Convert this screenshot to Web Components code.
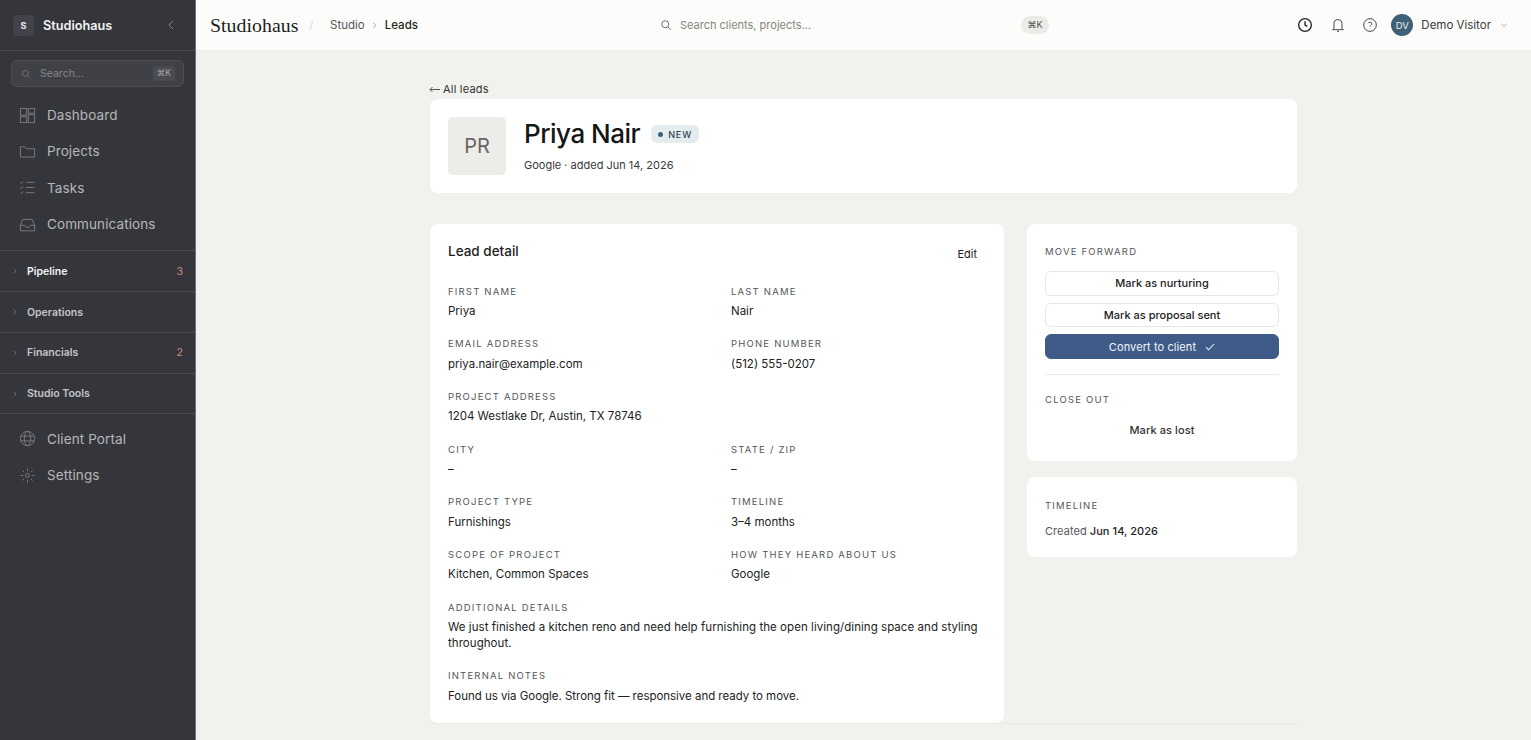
<!DOCTYPE html>
<html lang="en"><head><meta charset="utf-8"><title>Studiohaus</title>
<style>
html,body{margin:0;height:100%;overflow:hidden;background:#f1f1ed;font-family:Inter,"Noto Sans",sans-serif;color:#1a1a1a}
</style></head><body>
<app-shell></app-shell>
<script>
const I={
dash:'<rect x="3" y="3" width="8" height="8.5" /><rect x="13" y="3" width="8" height="6"/><rect x="3" y="13.5" width="8" height="7.5"/><rect x="13" y="11" width="8" height="10"/>',
folder:'<path d="M3 19V6h6l2 2.5h10V19z"/>',
tasks:'<path d="M3 5.5l1.3 1.3L6.5 4.3M3 12l1.3 1.3L6.5 10.8M3 18.5l1.3 1.3 2.2-2.5M10 5.5h11M10 12h11M10 18.5h11"/>',
inbox:'<path d="M3 13l3-7.5h12l3 7.5v7H3z"/><path d="M3 13h5.5l1.5 2.5h4l1.5-2.5H21"/>',
globe:'<circle cx="12" cy="12" r="9"/><ellipse cx="12" cy="12" rx="4" ry="9"/><path d="M3.5 9h17M3.5 15h17"/>',
gear:'<circle cx="12" cy="12" r="2.4"/><path d="M12 3v3.5M12 17.5V21M3 12h3.5M17.5 12H21M5.6 5.6l2.2 2.2M16.2 16.2l2.2 2.2M5.6 18.4l2.2-2.2M16.2 7.8l2.2-2.2"/>',
search:'<circle cx="10.5" cy="10.5" r="7"/><path d="M16 16l5.5 5.5"/>',
clock:'<circle cx="12" cy="12" r="9.5"/><path d="M12 6.5V12l3.5 2"/>',
bell:'<path d="M6 17V10a6 6 0 0 1 12 0v7l2 2H4z"/><path d="M10.5 21.5h3"/>',
help:'<circle cx="12" cy="12" r="9.5"/><path d="M9.3 9.5a2.8 2.8 0 0 1 5.4.8c0 1.9-2.7 2.2-2.7 3.9"/><path d="M12 17.2v.3"/>',
};
const svg=(n,s,c,w)=>`<svg width="${s}" height="${s}" viewBox="0 0 24 24" fill="none" stroke="${c}" stroke-width="${w}">${I[n]}</svg>`;
function def(name,css,html){
  customElements.define(name,class extends HTMLElement{
    constructor(){super();this.attachShadow({mode:'open'});}
    connectedCallback(){this.shadowRoot.innerHTML=`<style>${css}</style>`+(typeof html==='function'?html(this):html);}
  });
}
def('nav-item',`:host{display:flex;align-items:center;height:36.3px;padding-left:17.5px;gap:10.5px;font-size:13.5px;letter-spacing:.1px;color:#b6b7b9}svg{display:block;flex:none}`,
  e=>`${svg(e.getAttribute('icon'),19,'#808185',1.1)}<slot></slot>`);
def('nav-group',`:host{display:flex;align-items:center;height:39.4px;padding:.3px 12px 0 13px;border-bottom:1px solid #4a4b51;font-size:10.5px;font-weight:600;color:#c4c5c7;box-sizing:content-box}
 :host([active]){color:#f4f4f3}
 svg{flex:none;margin-right:10px}.n{margin-left:auto;color:#c98a78;font-weight:400;font-size:10.5px}`,
  e=>`<svg width="4" height="6" viewBox="0 0 4 6" fill="none" stroke="#7d7e82" stroke-width=".8"><path d="M.8.6 3.2 3 .8 5.4"/></svg><slot></slot>${e.getAttribute('n')?`<span class="n">${e.getAttribute('n')}</span>`:''}`);
def('app-sidebar',`:host{display:flex;flex-direction:column;flex:none;width:195px;height:100%;background:#35363c;border-right:1px solid #6f7075;box-sizing:content-box}
 .brand{display:flex;align-items:center;height:50px;border-bottom:1px solid #4a4b51;padding:0 21px 0 13px;gap:9px;flex:none}
 .logo{width:21px;height:21px;border-radius:4px;background:#42434a;color:#eee;font-size:9px;font-weight:700;display:flex;align-items:center;justify-content:center}
 .name{font-size:12.7px;font-weight:600;color:#f2f2f1;flex:1}
 .search{display:flex;align-items:center;margin:9px 11px 10px;height:27px;box-sizing:border-box;border:1px solid #4e4f55;border-radius:6px;background:#404147;padding:0 8px 0 9px;gap:9px;font-size:10.5px;color:#85868a}
 .search span{flex:1}.k{flex:none!important;background:#4a4b51;border-radius:3px;color:#a8a9ac;font-size:8.5px;padding:2px 4px;line-height:11px;margin-right:0}
 .nav{padding-bottom:8.3px;border-bottom:1px solid #4a4b51}
 .foot{padding-top:6.5px}`,
 `<div class="brand"><div class="logo">S</div><div class="name">Studiohaus</div><svg width="6" height="10" viewBox="0 0 6 10" fill="none" stroke="#85868a" stroke-width="1"><path d="M5 1 1 5l4 4"/></svg></div>
 <div class="search">${svg('search',10,'#85868a',1.7)}<span>Search…</span><span class="k">⌘K</span></div>
 <div class="nav"><nav-item icon="dash">Dashboard</nav-item><nav-item icon="folder">Projects</nav-item><nav-item icon="tasks">Tasks</nav-item><nav-item icon="inbox">Communications</nav-item></div>
 <nav-group active n="3">Pipeline</nav-group><nav-group>Operations</nav-group><nav-group n="2">Financials</nav-group><nav-group>Studio Tools</nav-group>
 <div class="foot"><nav-item icon="globe">Client Portal</nav-item><nav-item icon="gear">Settings</nav-item></div>`);
def('app-header',`:host{display:flex;align-items:center;flex:none;height:50px;background:#fcfcfa;border-bottom:1px solid #ebebe7;padding:0 24px 0 14px;font-size:11.5px;position:relative}
 .logo{font-family:"Liberation Serif",serif;font-size:19.8px;color:#1c1c1c;letter-spacing:.05px}
 .sl{color:#d8d8d4;margin:0 17px 0 11px;font-size:13px;font-family:"Liberation Sans"}
 .c{color:#55565a}.ch{margin:0 7.5px}.cur{color:#1f1f1f;font-weight:500}
 .search{display:flex;align-items:center;width:389px;margin-left:242px;gap:8px;color:#86867f;font-size:11px}
 .search span{flex:1}.k{flex:none!important;background:#ebebe7;color:#555;border-radius:9px;padding:3px 6.5px 3px;font-size:9px;line-height:12px}
 .r{margin-left:auto;display:flex;align-items:center}
 .r svg{display:block}
 .av{width:22px;height:22px;border-radius:50%;background:#3f6176;color:#eaf0f3;font-size:9.5px;display:flex;align-items:center;justify-content:center;margin:0 8px 0 13px}
 .u{color:#3a3a3a;font-size:11.5px}`,
 `<span class="logo">Studiohaus</span><span class="sl">/</span><span class="c">Studio</span><svg class="ch" width="5" height="7" viewBox="0 0 5 7" fill="none" stroke="#a5a5a0" stroke-width=".9"><path d="M1 .8 4 3.5 1 6.2"/></svg><span class="cur">Leads</span>
 <div class="search">${svg('search',12,'#55565a',1.7)}<span>Search clients, projects…</span><span class="k">⌘K</span></div>
 <div class="r"><span style="margin-right:17px">${svg('clock',16,'#222',2)}</span><span style="margin-right:16.5px">${svg('bell',16,'#444',1.5)}</span>${svg('help',16,'#444',1.5)}<div class="av">DV</div><span class="u">Demo Visitor</span><svg style="margin-left:10px" width="6" height="4" viewBox="0 0 6 4" fill="none" stroke="#a5a5a0" stroke-width=".9"><path d="M.4.5 3 3.4 5.6.5"/></svg></div>`);
def('lead-field',`:host{display:block}:host([wide]){grid-column:1/-1}
 .l{font-size:9.5px;letter-spacing:1.2px;color:#55565a;line-height:14px;text-transform:uppercase;font-weight:400;padding-top:.35px}
 .v{font-size:11.5px;line-height:16px;margin-top:4.25px;color:#222}`,
 e=>`<div class="l">${e.getAttribute('label')}</div><div class="v" style="letter-spacing:${e.getAttribute('ls')||0}px"><slot></slot></div>`);
def('white-card',`:host{display:block;background:#fff;border-radius:8px;box-sizing:border-box}`,`<slot></slot>`);
def('action-btn',`:host{display:flex;align-items:center;justify-content:center;height:24.5px;box-sizing:border-box;border:1px solid #e6e5df;border-radius:6px;font-size:11px;font-weight:500;color:#222;background:#fff;gap:9px}
 :host([primary]){background:#3f5c88;border-color:#3f5c88;color:#f3f5f8;font-weight:400;letter-spacing:.1px}:host([plain]){border-color:transparent;color:#333;letter-spacing:.1px}`,
 e=>`<slot></slot>${e.hasAttribute('primary')?'<svg width="10" height="8" viewBox="0 0 10 8" fill="none" stroke="#eef1f5" stroke-width="1.1"><path d="M1 4.2 3.6 6.8 9 1"/></svg>':''}`);
def('sec-label',`:host{display:block;font-size:9.5px;letter-spacing:1.2px;color:#55565a;line-height:14px}`,`<slot></slot>`);
def('lead-page',`:host{display:block;width:867px;margin:0 auto;padding-top:31px}
 .back{font-size:11px;letter-spacing:.2px;color:#333;line-height:14px;margin-bottom:3px;font-weight:400;height:14px;display:flex;align-items:center;gap:3px;margin-left:-1px}
 .hd{display:flex;height:94px;padding:18px;gap:18px;box-sizing:border-box}
 .pr{width:58px;height:58px;background:#ecece8;border-radius:5px;color:#66665f;font-size:20px;display:flex;align-items:center;justify-content:center;flex:none}
 .t{display:flex;align-items:center;gap:11px;height:34px}
 h1{margin:0;font-size:26px;font-weight:500;color:#161616;letter-spacing:-.5px;line-height:34px}
 .badge{display:inline-flex;align-items:center;height:18px;border-radius:6px;background:#e4ecef;padding:0 7px;gap:5px;font-size:9px;letter-spacing:.9px;font-weight:500;color:#2f4654}
 .dot{width:5px;height:5px;border-radius:50%;background:#3f6176}
 .sub{font-size:11px;color:#3a3a3a;margin-top:7px;line-height:14px}
 .grid{display:grid;grid-template-columns:574px 270px;gap:23px;margin-top:31px;border-bottom:1px solid #e9e9e5;padding-bottom:0}
 .dh{display:flex;justify-content:space-between;height:42.3px}
 .edit{font-size:11px;font-weight:400;color:#222;padding:5px 9px 0 0}
 .f{display:grid;grid-template-columns:255px 1fr;column-gap:28px;row-gap:18.1px}
 .side{display:flex;flex-direction:column;gap:16px}
 .btns{display:flex;flex-direction:column;gap:7.2px;margin-top:12px}
 hr{border:0;border-top:1px solid #eaeae6;margin:15.5px 0 18px}
 .pl{margin-top:10.5px}
 .cr{font-size:11px;margin-top:10px;color:#55565a;line-height:16px;letter-spacing:.05px}.cr b{font-weight:500;color:#222}`,
 `<div class="back"><svg width="11" height="7" viewBox="0 0 11 7" fill="none" stroke="#444" stroke-width=".9"><path d="M11 3.5H1M3.5 1 1 3.5 3.5 6"/></svg><span>All leads</span></div>
 <white-card><div class="hd"><div class="pr">PR</div><div><div class="t"><h1>Priya Nair</h1><span class="badge"><span class="dot"></span>NEW</span></div><div class="sub">Google · added Jun 14, 2026</div></div></div></white-card>
 <div class="grid">
 <white-card style="padding:18px;height:499px"><div class="dh"><h2 style="margin:0;font-size:13.5px;font-weight:500;line-height:19px;color:#1d1d1d">Lead detail</h2><span class="edit">Edit</span></div>
 <div class="f">
 <lead-field label="First name">Priya</lead-field><lead-field label="Last name">Nair</lead-field>
 <lead-field label="Email address">priya.nair@example.com</lead-field><lead-field label="Phone number">(512) 555-0207</lead-field>
 <lead-field wide label="Project address">1204 Westlake Dr, Austin, TX 78746</lead-field>
 <lead-field label="City">–</lead-field><lead-field label="State / ZIP">–</lead-field>
 <lead-field label="Project type">Furnishings</lead-field><lead-field label="Timeline">3–4 months</lead-field>
 <lead-field label="Scope of project">Kitchen, Common Spaces</lead-field><lead-field label="How they heard about us">Google</lead-field>
 <lead-field wide ls="0.05" label="Additional details">We just finished a kitchen reno and need help furnishing the open living/dining space and styling throughout.</lead-field>
 <lead-field wide ls="-0.03" label="Internal notes">Found us via Google. Strong fit — responsive and ready to move.</lead-field>
 </div></white-card>
 <div class="side">
 <white-card style="padding:21px 18px 0;height:237px"><sec-label>MOVE FORWARD</sec-label><div class="btns"><action-btn>Mark as nurturing</action-btn><action-btn>Mark as proposal sent</action-btn><action-btn primary>Convert to client</action-btn></div><hr><sec-label>CLOSE OUT</sec-label><div class="pl"><action-btn plain>Mark as lost</action-btn></div></white-card>
 <white-card style="padding:22px 18px 0;height:80px"><sec-label>TIMELINE</sec-label><div class="cr">Created <b>Jun 14, 2026</b></div></white-card>
 </div></div>`);
def('app-shell',`:host{display:flex;height:100vh;overflow:hidden}.m{flex:1;display:flex;flex-direction:column;min-width:0}.c{flex:1;overflow:hidden}`,
 `<app-sidebar></app-sidebar><div class="m"><app-header></app-header><div class="c"><lead-page></lead-page></div></div>`);
</script></body></html>
